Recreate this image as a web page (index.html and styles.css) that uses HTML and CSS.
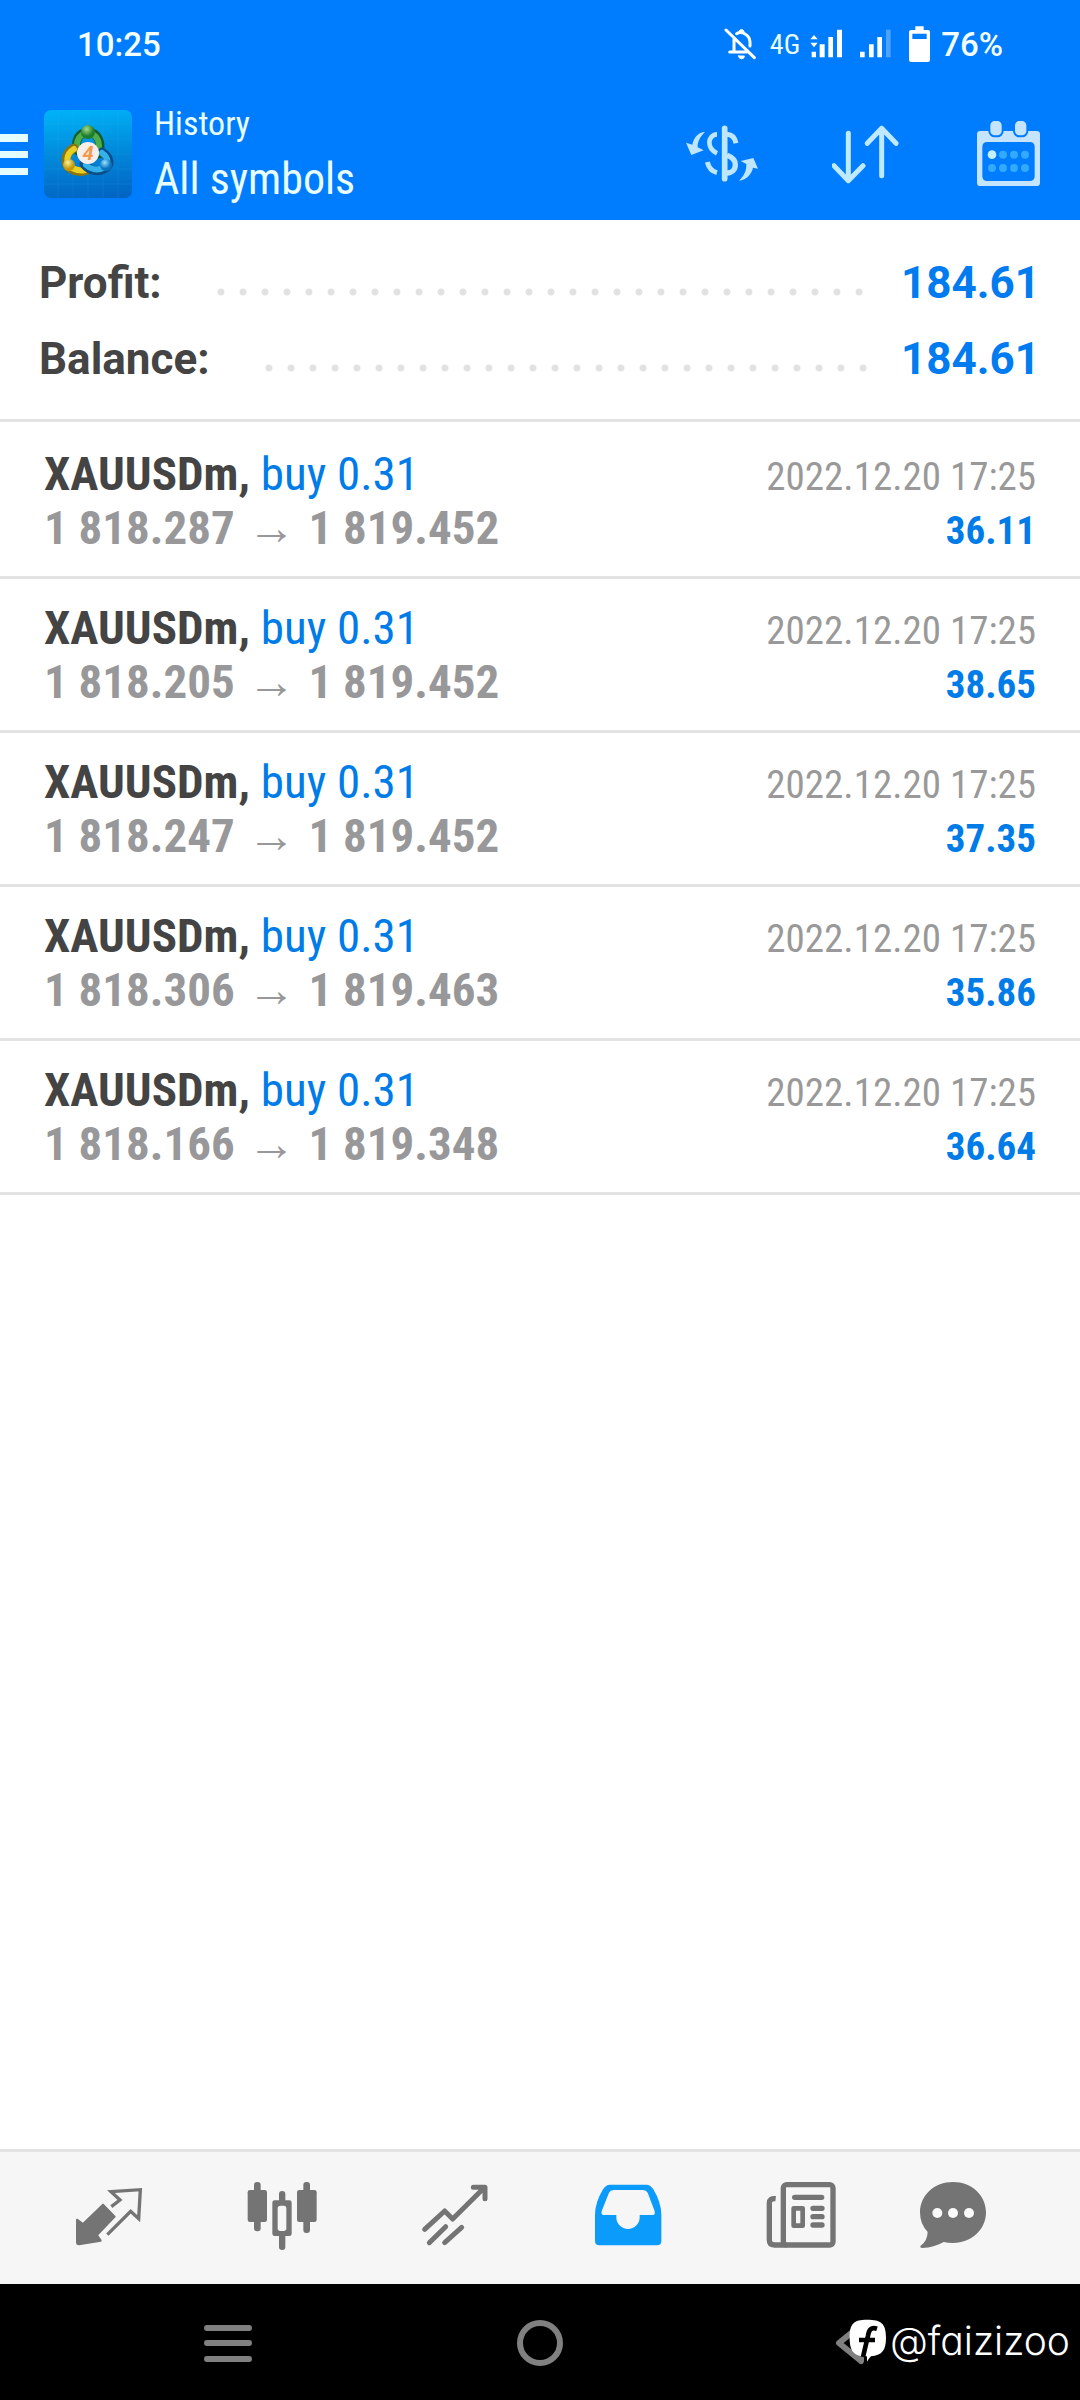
FILE: index.html
```html
<!DOCTYPE html>
<html lang="en">
<head>
<meta charset="utf-8">
<meta name="viewport" content="width=device-width, initial-scale=1">
<title>History</title>
<link rel="stylesheet" href="styles.css">
</head>
<body>
<header class="header">
  <div class="status">
    <span class="status-text">10:25</span>
    <div class="status-icons">
      <svg width="36" height="40" viewBox="195 75 108 120" fill="none" stroke="#fff" stroke-width="9" stroke-linecap="round" stroke-linejoin="round">
        <path d="M201 90L286 173M212 156H262M225 152V118M233 101C248 92 272 104 273 126V138"/>
        <path d="M240 94a8 8 0 0 1 15 0zM239 168h17a8 8 0 0 1-17 0z" fill="#fff" stroke-width="3"/>
      </svg>
      <span class="network">4G</span>
      <svg width="39" height="40" viewBox="450 75 117 120" fill="#fff">
        <path d="M462 105l11 13h-22zM462 142l-11-14h22zM455 155h13v17h-13zM479 133h15v39h-15zM505 111h14v61h-14zM531 89h15v83h-15z"/>
      </svg>
      <svg width="39" height="40" viewBox="597 75 117 120" fill="#fff">
        <path d="M600 155h14v17h-14zM627 133h14v39h-14zM652 111h14v61h-14z"/><path d="M678 89h14v83h-14z" opacity=".3"/>
      </svg>
      <svg width="23" height="40" viewBox="744 75 69 120">
        <path fill="#fff" fill-rule="evenodd" d="M766 79h25v11h13q6 0 6 6v84q0 6-6 6h-51q-6 0-6-6v-84q0-6 6-6h13zM757 101v16h43v-16z"/>
      </svg>
      <span class="status-text">76%</span>
    </div>
  </div>
  <div class="toolbar">
    <button class="menu" type="button" aria-label="Open menu">
      <svg width="28" height="42" viewBox="0 0 28 42" fill="#e6fdff"><path d="M0 1h28v8H0zM0 18h28v7H0zM0 35h28v7H0z"/></svg>
    </button>
    <svg class="app-icon" width="88" height="88" viewBox="0 0 88 88">
      <defs>
        <linearGradient id="tile" x1=".5" y1="0" x2=".6" y2="1"><stop offset="0" stop-color="#00b0f6"/><stop offset=".5" stop-color="#0188da"/><stop offset="1" stop-color="#0265c4"/></linearGradient>
        <radialGradient id="green" cx=".4" cy=".3"><stop offset="0" stop-color="#a4dc8c"/><stop offset="1" stop-color="#1d7d2c"/></radialGradient>
        <radialGradient id="gold" cx=".4" cy=".3"><stop offset="0" stop-color="#fbf29a"/><stop offset="1" stop-color="#c49a0c"/></radialGradient>
        <radialGradient id="azure" cx=".4" cy=".3"><stop offset="0" stop-color="#9be2ff"/><stop offset="1" stop-color="#0a74c0"/></radialGradient>
      </defs>
      <rect width="88" height="88" rx="7" fill="url(#tile)"/>
      <path d="M14 0V88M29 0V88M44 0V88M59 0V88M74 0V88M0 14H88M0 29H88M0 44H88M0 59H88M0 74H88" stroke="#4cc0f0" stroke-opacity=".12"/>
      <g stroke-linecap="round" fill="none">
        <path d="M34 41C30 30 35 23 44 22C54 23 58 32 55 44" stroke="#155c2a" stroke-width="9"/>
        <path d="M34 40C31 30 36 24 44 23C53 24 57 32 54 43" stroke="#4fae4c" stroke-width="6"/>
        <path d="M30 38C21 43 19 54 27 59C32 62 38 62 43 60" stroke="#8a7410" stroke-width="9"/>
        <path d="M30 39C22 44 21 53 28 58C32 60 37 61 41 60" stroke="#e8cf22" stroke-width="6"/>
        <path d="M58 42C67 48 67 55 60 59C53 63 45 60 40 54" stroke="#0c4f88" stroke-width="9"/>
        <path d="M58 43C65 48 65 54 59 58C53 61 46 59 42 55" stroke="#35b1ea" stroke-width="6"/>
      </g>
      <circle cx="44" cy="22" r="7" fill="url(#green)"/>
      <circle cx="25" cy="55" r="6" fill="url(#gold)"/>
      <circle cx="62" cy="55" r="6" fill="url(#azure)"/>
      <circle cx="44" cy="43" r="11" fill="#f6eeea"/>
      <text class="badge-digit" x="44" y="50" text-anchor="middle">4</text>
    </svg>
    <div class="titles">
      <p class="section">History</p>
      <h1 class="filter">All symbols</h1>
    </div>
    <div class="actions">
      <button type="button" aria-label="Deals">
        <svg width="76" height="67" viewBox="72 360 228 201" fill="none" stroke="#bfe6ff" stroke-width="14">
          <path d="M194 382V533" stroke-width="17" stroke-linecap="round"/>
          <path d="M171 400C155 400 148 415 148 424C148 440 158 451 171 457"/>
          <path d="M201 400C216 401 225 411 228 427" stroke-width="15"/>
          <path d="M201 463C217 469 226 479 226 491C226 506 216 516 201 516" stroke-width="16"/>
          <path d="M142 483C146 500 155 511 171 515" stroke-width="15"/>
          <path stroke="none" fill="#bfe6ff" d="M135 393C115 394 101 409 97 431L78 425L94 462L131 448L113 439C112 422 121 406 135 393zM237 539C257 538 275 520 279 500L294 503L280 471L242 480L259 489C260 508 253 524 237 539z"/>
        </svg>
      </button>
      <button type="button" aria-label="Sort">
        <svg width="72" height="67" viewBox="516 360 216 201" fill="none" stroke="#bfe9ff" stroke-width="15" stroke-linecap="round" stroke-linejoin="round">
          <path d="M565 397V538M522 494L565 539L609 494M665 524V382M622 427L665 382L708 427"/>
        </svg>
      </button>
      <button type="button" aria-label="Choose period">
        <svg width="65" height="67" viewBox="948 360 195 201">
          <path fill="#c4e4ff" fill-rule="evenodd" d="M961 390h169q10 0 10 10v145q0 10-10 10H961q-10 0-10-10V400q0-10 10-10zM982 423q-15 0-15 15v88q0 14 15 14h127q15 0 15-14v-88q0-15-15-15z"/>
          <g fill="#c4e4ff" stroke="#007cff" stroke-width="6"><rect x="988" y="357" width="40" height="49" rx="16"/><rect x="1062" y="357" width="40" height="49" rx="16"/></g>
          <circle cx="996" cy="461" r="13" fill="#c4f0ff"/>
          <g fill="#32aaff"><circle cx="1029" cy="461" r="12"/><circle cx="1062" cy="461" r="12"/><circle cx="1095" cy="461" r="12"/><circle cx="996" cy="501" r="12"/><circle cx="1029" cy="501" r="12"/><circle cx="1062" cy="501" r="12"/><circle cx="1095" cy="501" r="12"/></g>
        </svg>
      </button>
    </div>
  </div>
</header>

<main class="content">
  <dl class="summary">
    <div class="total"><dt>Profit:</dt><dd>184.61</dd></div>
    <div class="total"><dt>Balance:</dt><dd>184.61</dd></div>
  </dl>
  <ul class="deals">
    <li class="deal">
      <p class="symbol">XAUUSDm, <span class="side">buy 0.31</span></p><time class="date">2022.12.20 17:25</time>
      <p class="prices">1 818.287 <span class="arrow">→</span> 1 819.452</p><p class="result">36.11</p>
    </li>
    <li class="deal">
      <p class="symbol">XAUUSDm, <span class="side">buy 0.31</span></p><time class="date">2022.12.20 17:25</time>
      <p class="prices">1 818.205 <span class="arrow">→</span> 1 819.452</p><p class="result">38.65</p>
    </li>
    <li class="deal">
      <p class="symbol">XAUUSDm, <span class="side">buy 0.31</span></p><time class="date">2022.12.20 17:25</time>
      <p class="prices">1 818.247 <span class="arrow">→</span> 1 819.452</p><p class="result">37.35</p>
    </li>
    <li class="deal">
      <p class="symbol">XAUUSDm, <span class="side">buy 0.31</span></p><time class="date">2022.12.20 17:25</time>
      <p class="prices">1 818.306 <span class="arrow">→</span> 1 819.463</p><p class="result">35.86</p>
    </li>
    <li class="deal">
      <p class="symbol">XAUUSDm, <span class="side">buy 0.31</span></p><time class="date">2022.12.20 17:25</time>
      <p class="prices">1 818.166 <span class="arrow">→</span> 1 819.348</p><p class="result">36.64</p>
    </li>
  </ul>
</main>

<nav class="tabs" aria-label="Sections">
  <button type="button" aria-label="Quotes">
    <svg width="72" height="72" viewBox="97 126 216 216">
      <path fill="#747474" stroke="#747474" stroke-width="6" stroke-linejoin="round" d="M187 194L222 230L169 285L180 302L115 313Q109 313 109 307V239L127 252z"/>
      <path fill="none" stroke="#747474" stroke-width="10" stroke-linejoin="miter" d="M212 200L238 180L211 155L299 149L294 236L270 214L200 284"/>
    </svg>
  </button>
  <button type="button" aria-label="Charts">
    <svg width="72" height="72" viewBox="615 126 216 216" fill="#747474">
      <rect x="639" y="126" width="20" height="148" rx="9"/><rect x="620" y="150" width="58" height="96" rx="7"/>
      <rect x="787" y="126" width="20" height="153" rx="9"/><rect x="768" y="150" width="59" height="96" rx="7"/>
      <rect x="714" y="153" width="19" height="177" rx="9"/><rect x="694" y="181" width="58" height="107" rx="7"/>
      <rect x="710" y="197" width="26" height="76" rx="8" fill="#f6f6f6"/>
    </svg>
  </button>
  <button type="button" aria-label="Trade">
    <svg width="72" height="72" viewBox="85 126 216 216" fill="none" stroke="#747474" stroke-width="15" stroke-linecap="round" stroke-linejoin="round">
      <path d="M102 268L162 213L186 237L282 142M248 142H283V176"/>
      <path d="M116 308L165 260M162 308L213 262"/>
    </svg>
  </button>
  <button type="button" aria-label="History" aria-current="page">
    <svg width="72" height="72" viewBox="604 126 216 216">
      <path fill="#0a9bfb" fill-rule="evenodd" d="M658 134H767Q780 134 788 148Q812 188 812 225V303Q812 316 799 316H626Q613 316 613 303V225Q613 188 637 148Q645 134 658 134zM669 150Q659 150 655 158L634 211Q629 225 639 225H677V232A35 35 0 0 0 747 232V225H786Q796 225 791 211L771 158Q767 150 757 150z"/>
    </svg>
  </button>
  <button type="button" aria-label="News">
    <svg width="72" height="72" viewBox="105 126 216 216" fill="none" stroke="#747474" stroke-width="16" stroke-linecap="round" stroke-linejoin="round">
      <rect x="160" y="134" width="149" height="181" rx="10"/>
      <path d="M137 176Q118 174 118 190V301Q118 315 133 315H170" stroke-linecap="butt"/>
      <path d="M194 172H275M249 205H276M249 230H276M249 255H276"/>
      <rect x="191" y="205" width="27" height="52" stroke-width="14"/>
    </svg>
  </button>
  <button type="button" aria-label="Messages">
    <svg width="72" height="72" viewBox="561 126 216 216" fill="#747474">
      <path d="M669 126C725 126 768 166 768 217C768 268 725 309 669 309Q653 309 641 306Q612 323 577 324Q568 323 572 317Q592 304 593 276Q570 252 570 217C570 166 613 126 669 126z"/>
      <g fill="#fafafa"><circle cx="622" cy="219" r="15"/><circle cx="669" cy="219" r="15"/><circle cx="717" cy="219" r="15"/></g>
    </svg>
  </button>
</nav>

<div class="system">
  <button type="button" aria-label="Recent apps"><svg width="48" height="48" viewBox="0 0 48 48" stroke="#808080" stroke-width="6" stroke-linecap="round"><path d="M3 9H45M3 24H45M3 40H45"/></svg></button>
  <button type="button" aria-label="Home"><svg width="48" height="48" viewBox="0 0 48 48" fill="none" stroke="#808080" stroke-width="6"><circle cx="24" cy="24" r="20"/></svg></button>
  <button type="button" aria-label="Back"><svg width="48" height="48" viewBox="0 0 48 48" fill="none" stroke="#808080" stroke-width="6" stroke-linejoin="round" stroke-linecap="round"><path d="M33 6L11 24L33 42z"/></svg></button>
  <div class="credit">
    <svg width="38" height="44" viewBox="0 0 114 132">
      <path fill="#fff" d="M54 2C97 2 111 14 111 56C111 96 98 108 66 112Q60 118 54 128V112C15 112 2 98 2 56C2 14 14 2 54 2z"/>
      <path fill="none" stroke="#000" stroke-width="14" d="M84 29C66 23 60 32 57 50L42 114M30 63H78"/>
    </svg>
    <span>@faizizoo</span>
  </div>
</div>
</body>
</html>
```
FILE: styles.css
```css
* { box-sizing: border-box; margin: 0; padding: 0; }

body {
  min-height: 100vh;
  display: flex;
  flex-direction: column;
  background: #fff;
  font-family: "Roboto Condensed", Roboto, "Liberation Sans", sans-serif;
}

button { border: 0; background: none; font: inherit; cursor: pointer; }
button, svg { display: block; }
ul { list-style: none; }

/* Header */
.header { background: #007cff; color: #e9feff; }

.status {
  display: flex;
  justify-content: space-between;
  padding: 25px 77px 23px;
}
.status-text { font: 500 33px/40px Roboto, sans-serif; color: #f4ffff; }
.status-icons { display: flex; gap: 10px; }
.network { font-size: 28px; line-height: 40px; }

.toolbar {
  display: flex;
  align-items: center;
  min-height: 132px;
  padding-right: 39px;
}
.menu { margin-right: 16px; }
.titles { margin-left: 22px; }
.section { font-size: 34px; line-height: 50px; font-weight: 400; }
.filter { font-size: 44px; line-height: 62px; font-weight: 400; }
.actions { display: flex; gap: 72px; margin-left: auto; }
.badge-digit { font: italic 700 20px Roboto, sans-serif; fill: #f39a4c; }

/* Totals */
.summary {
  padding: 25px 40px 22px 39px;
  border-bottom: 3px solid #e3e3e3;
}
.total {
  display: flex;
  gap: 48px;
  font: 700 44px/76px Roboto, sans-serif;
}
.total dt { color: #444; }
.total dd {
  flex: 1;
  display: flex;
  gap: 24px;
  color: #007cf0;
}
.total dd::before {
  content: "";
  flex: 1;
  background: radial-gradient(circle at 11px 47px, #e2e2e2 3px, transparent 4px) 0 0 / 22px 76px repeat-x;
}

/* Deals */
.content { flex: 1; }
.deals { padding-top: 3px; }
.deal {
  display: grid;
  grid-template-columns: 1fr auto;
  align-items: baseline;
  padding: 22px 44px 21px;
  border-bottom: 3px solid #e3e3e3;
  font-size: 47px;
  line-height: 54px;
}
.symbol { font-weight: 700; color: #444; }
.side { font-weight: 400; color: #007ce8; }
.prices { font-weight: 700; color: #98989a; }
.arrow {
  margin: 0 2px;
  font-family: "Liberation Sans", sans-serif;
  font-size: 48px;
  line-height: 36px;
}
.date, .result { font-size: 39px; line-height: 44px; text-align: right; }
.date { color: #999; }
.result { font-weight: 700; color: #007ce8; }

/* Section tabs */
.tabs {
  display: grid;
  grid-template-columns: repeat(5, 173fr) 132fr;
  justify-items: center;
  padding: 30px 61px 30px 22px;
  border-top: 3px solid #e3e3e3;
  background: #f6f6f6;
}

/* System navigation */
.system {
  position: relative;
  display: flex;
  justify-content: space-between;
  padding: 35px 204px 33px;
  background: #000;
}
.credit {
  position: absolute;
  right: 10px;
  top: 33px;
  display: flex;
  align-items: center;
  gap: 3px;
  color: #fff;
  font: 300 39px/48px Inter, sans-serif;
  font-feature-settings: "cv11";
}
```
